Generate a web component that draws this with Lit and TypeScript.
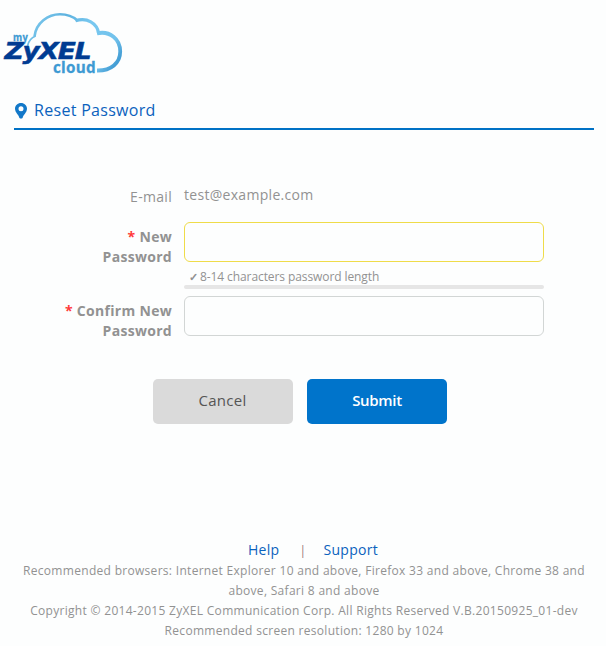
import { LitElement, html, css } from "lit";
import { customElement } from "lit/decorators.js";

@customElement("cloud-logo")
class CloudLogo extends LitElement {
  static styles = css`
    :host { display: block; width: 130px; height: 90px; }
    svg { display: block; }
    .arc { fill: none; stroke: url(#sky); }
    .word { font-family: "Open Sans", sans-serif; font-weight: 700; fill: #3d9ad3; stroke: #3d9ad3; stroke-width: .3; }
    .brand {
      font-family: "DejaVu Sans", sans-serif; font-weight: 700; font-style: italic; letter-spacing: -1px;
      fill: #003c92; stroke: #003c92; stroke-width: .5;
    }
  `;
  render() {
    return html`<svg width="130" height="90" viewBox="0 0 130 90" role="img" aria-label="myZyXEL cloud">
      <defs>
        <linearGradient id="sky" gradientUnits="userSpaceOnUse" x1="30" y1="15" x2="110" y2="72">
          <stop offset="0" stop-color="#83cdf0" /><stop offset=".3" stop-color="#5db2df" />
          <stop offset=".55" stop-color="#78c8f0" /><stop offset=".85" stop-color="#72c2ec" />
          <stop offset="1" stop-color="#449ed5" />
        </linearGradient>
      </defs>
      <path class="arc" stroke-width="1.8" d="M27.5 46C28.5 41 31 37.8 35.6 36" />
      <path class="arc" stroke-width="2.6" d="M34.5 36.5C36 23 48 14.3 60 14.3C67 14.3 73 16.5 77.5 20.5" />
      <path class="arc" stroke-width="3.2" d="M75.5 20.8C87 17 97 23 98.8 33.5" />
      <path class="arc" stroke-width="3.8" d="M97 33.3C110 30.5 120.2 39 120.2 51.5C120.2 63 111 70.8 97 70.5" />
      <text class="word" x="13" y="41" font-size="11" textLength="15" lengthAdjust="spacingAndGlyphs">my</text>
      <text class="brand" x="4.5" y="59.2" font-size="22.5" textLength="86" lengthAdjust="spacingAndGlyphs">ZyXEL</text>
      <text class="word" x="53" y="73" font-size="16" textLength="43" lengthAdjust="spacingAndGlyphs">cloud</text>
    </svg>`;
  }
}

@customElement("app-root")
class AppRoot extends LitElement {
  static styles = css`
    :host {
      display: block; box-sizing: border-box; height: 646px; overflow: hidden;
      background: #fdfefe; color: #929292;
      font: 14px/20px "Open Sans", sans-serif; letter-spacing: .3px;
    }
    .title {
      margin: 0 12px 0 14px; height: 38px; border-bottom: 2px solid #0071c5;
      display: flex; align-items: flex-start; color: #0b62bd; font-size: 16px; line-height: 40px;
    }
    .pin { margin: 13px 7px 0 1px; flex: none; }
    form { margin: 55px 0 0; }
    .row { display: grid; grid-template-columns: 172px 360px; column-gap: 12px; }
    .label { text-align: right; }
    .strong { font-weight: 700; padding-top: 5px; }
    .star { color: #ff3b3b; }
    .email { height: 37px; }
    .email .label { padding-top: 2px; }
    input {
      display: block; box-sizing: border-box; width: 360px; height: 40px; margin: 0;
      border: 1px solid #d2d6d5; border-radius: 6px; background: #fdfefe; outline: 0;
    }
    .active { border-color: #efdc4a; }
    .hint { height: 23px; line-height: 30px; padding-left: 5px; font-size: 12px; letter-spacing: -.09px; display: flex; }
    .tick { width: 11px; flex: none; font-weight: 700; font-size: 11px; }
    .meter { height: 4px; border-radius: 2px; background: #e6e6e6; margin-bottom: 7px; }
    .buttons { display: flex; gap: 14px; margin: 38px 0 0 153px; }
    button {
      width: 140px; height: 45px; border: 0; border-radius: 5px; padding: 0 1px 3px 0;
      font: 15px/20px "Open Sans", sans-serif; letter-spacing: .3px; background: #dadada; color: #555;
    }
    .submit { background: #0074cb; color: #fff; font-weight: 600; letter-spacing: -.3px; padding-right: 0; }
    footer { margin-top: 116px; text-align: center; font-size: 12px; padding: 0 13px 0 15px; }
    .links { display: flex; justify-content: center; gap: 20px; height: 21px; font-size: 14px; color: #0b62bd; margin-left: 18px; }
    .bar { color: #977; font-size: 12px; line-height: 22px; width: 4px; }
    p { margin: 0; }
  `;
  render() {
    return html`
      <cloud-logo></cloud-logo>
      <div class="title">
        <svg class="pin" width="12" height="16" viewBox="0 0 12 16">
          <path fill="#1278c9" fill-rule="evenodd" d="M6 0C2.6 0 0 2.5 0 5.7C0 9.5 4 12 4.4 15Q6 16 7.6 15C8 12 12 9.5 12 5.7C12 2.5 9.4 0 6 0ZM6 3.3A2.5 2.5 0 1 1 6 8.3A2.5 2.5 0 1 1 6 3.3Z" />
        </svg><span>Reset Password</span>
      </div>
      <form>
        <div class="row email"><div class="label">E-mail</div><div class="value">test@example.com</div></div>
        <div class="row">
          <div class="label strong"><span class="star">*</span> New<br />Password</div>
          <div><input class="active" type="password" /><div class="hint"><span class="tick">✓</span><span>8-14 characters password length</span></div><div class="meter"></div></div>
        </div>
        <div class="row">
          <div class="label strong"><span class="star">*</span> Confirm New<br />Password</div>
          <div><input type="password" /></div>
        </div>
        <div class="buttons"><button type="button">Cancel</button><button type="button" class="submit">Submit</button></div>
      </form>
      <footer>
        <div class="links"><span>Help</span><span class="bar">|</span><span>Support</span></div>
        <p>Recommended browsers: Internet Explorer 10 and above, Firefox 33 and above, Chrome 38 and<br />above, Safari 8 and above</p>
        <p>Copyright © 2014-2015 ZyXEL Communication Corp. All Rights Reserved V.B.20150925_01-dev</p>
        <p>Recommended screen resolution: 1280 by 1024</p>
      </footer>`;
  }
}
